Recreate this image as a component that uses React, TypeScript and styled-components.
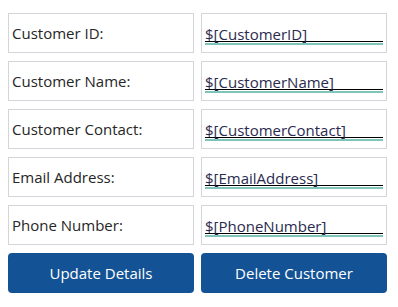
import React from 'react';
import styled, { createGlobalStyle } from 'styled-components';

const GlobalStyle = createGlobalStyle`
  body {
    margin: 0;
    background: #ffffff;
    font-family: 'Open Sans', 'Liberation Sans', sans-serif;
  }
`;

const Form = styled.div`
  display: grid;
  grid-template-columns: 186px 186px;
  column-gap: 7px;
  row-gap: 8px;
  padding: 13px 8px;
`;

const Cell = styled.div`
  box-sizing: border-box;
  height: 40px;
  border: 1px solid #d2d6db;
  background: #ffffff;
  display: flex;
  align-items: center;
  padding: 0 3px;
`;

const ValueCell = styled(Cell)`
  align-items: flex-start;
`;

const Label = styled.span`
  font-size: 15px;
  color: #262626;
`;

// the input underline: thin black rule, then a teal focus line
const ValueBox = styled.div`
  flex: 1;
  margin-top: 13px;
  font-size: 15px;
  line-height: 14px;
  color: #2b2b4f;
  border-bottom: 1px solid #000000;
  box-shadow: 0 1px 0 #ffffff, 0 3px 0 #7fc4bb;
  white-space: nowrap;
`;

const Button = styled.button`
  box-sizing: border-box;
  height: 40px;
  border: none;
  border-radius: 4px;
  background: #135395;
  color: #ffffff;
  font-family: 'Open Sans', 'Liberation Sans', sans-serif;
  font-size: 15px;
  cursor: pointer;
`;

const fields: [string, string][] = [
  ['Customer ID:', 'CustomerID'],
  ['Customer Name:', 'CustomerName'],
  ['Customer Contact:', 'CustomerContact'],
  ['Email Address:', 'EmailAddress'],
  ['Phone Number:', 'PhoneNumber'],
];

export default function App() {
  return (
    <>
      <GlobalStyle />
      <Form>
        {fields.map(([label, key]) => (
          <React.Fragment key={key}>
            <Cell>
              <Label>{label}</Label>
            </Cell>
            <ValueCell>
              <ValueBox>{`$[${key}]`}</ValueBox>
            </ValueCell>
          </React.Fragment>
        ))}
        <Button>Update Details</Button>
        <Button>Delete Customer</Button>
      </Form>
    </>
  );
}
